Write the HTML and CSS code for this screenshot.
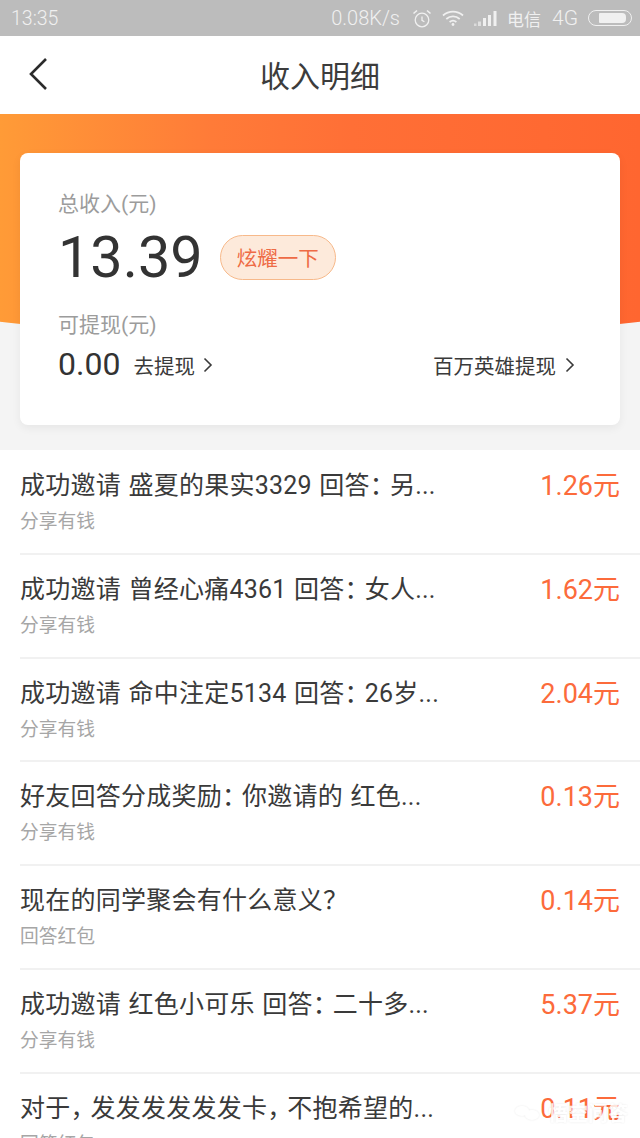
FILE: index.html
```html
<!DOCTYPE html>
<html lang="zh-CN">

<head>
    <meta charset="UTF-8">
    <meta name="viewport" content="width=device-width, initial-scale=1.0">
    <title>收入明细</title>
    <link rel="stylesheet" href="styles.css">
</head>

<body>
    <div class="pantalla">
        <div class="estado">
            <span class="hora">13:35</span>
            <div class="estado-der">
                <span class="red">0.08K/s</span>
                <svg width="20" height="19" viewBox="0 0 20 19" fill="none" stroke="#f0f0f0" stroke-width="1.3">
                    <circle cx="10" cy="11" r="6.800" />
                    <path d="M10 7.500v3.800l2.400 1.400" />
                    <path d="M1.500 4.500 5 1.500M18.500 4.500 15 1.500" stroke-width="1.600" />
                </svg>
                <svg width="22" height="16" viewBox="0 0 22 16" fill="none" stroke="#f0f0f0" stroke-width="1.700">
                    <path d="M1 5.500c5.800-5.200 14.200-5.200 20 0" />
                    <path d="M4.300 9c4-3.500 9.400-3.500 13.400 0" />
                    <path d="M7.600 12c2-1.600 4.800-1.600 6.800 0" />
                    <circle cx="11" cy="14.500" r="1.400" fill="#f0f0f0" stroke="none" />
                </svg>
                <svg width="23" height="15" viewBox="0 0 23 15" fill="#f0f0f0">
                    <rect x="0" y="12.500" width="2.500" height="2.500" opacity=".6" />
                    <rect x="4" y="10.500" width="3" height="4.500" opacity=".7" />
                    <rect x="9" y="7" width="3" height="8" />
                    <rect x="14" y="4" width="3" height="11" />
                    <rect x="19.500" y="0" width="3" height="15" />
                </svg>
                <span class="operador">电信</span>
                <span class="red-tipo">4G</span>
                <div class="bateria"><div class="bateria-nivel"></div></div>
            </div>
        </div>

        <div class="cabecera">
            <svg class="atras" width="20" height="34" viewBox="0 0 20 34" fill="none" stroke="#2b2b2b" stroke-width="2.600">
                <path d="M18 2 3 17l15 15" />
            </svg>
            <h1>收入明细</h1>
        </div>

        <div class="resumen">
            <div class="naranja"></div>
            <div class="tarjeta">
                <div class="etiqueta">总收入(元)</div>
                <div class="fila-total">
                    <span class="total">13.39</span>
                    <span class="presumir">炫耀一下</span>
                </div>
                <div class="etiqueta etiqueta-2">可提现(元)</div>
                <div class="fila-retiro">
                    <span class="saldo">0.00</span>
                    <span class="enlace">去提现
                        <svg width="10" height="16" viewBox="0 0 10 16" fill="none" stroke="#3a3a3a" stroke-width="1.600"><path d="M1.500 1.500 8 8l-6.500 6.500" /></svg>
                    </span>
                    <span class="enlace enlace-der">百万英雄提现
                        <svg width="10" height="16" viewBox="0 0 10 16" fill="none" stroke="#3a3a3a" stroke-width="1.600"><path d="M1.500 1.500 8 8l-6.500 6.500" /></svg>
                    </span>
                </div>
            </div>
        </div>

        <div class="lista">
            <div class="item">
                <div class="item-texto">
                    <div class="titulo">成功邀请 盛夏的果实3329 回答<span class="punt">：</span>另...</div>
                    <div class="origen">分享有钱</div>
                </div>
                <div class="monto">1.26元</div>
            </div>
            <div class="item">
                <div class="item-texto">
                    <div class="titulo">成功邀请 曾经心痛4361 回答<span class="punt">：</span>女人...</div>
                    <div class="origen">分享有钱</div>
                </div>
                <div class="monto">1.62元</div>
            </div>
            <div class="item">
                <div class="item-texto">
                    <div class="titulo">成功邀请 命中注定5134 回答<span class="punt">：</span>26岁...</div>
                    <div class="origen">分享有钱</div>
                </div>
                <div class="monto">2.04元</div>
            </div>
            <div class="item">
                <div class="item-texto">
                    <div class="titulo">好友回答分成奖励<span class="punt">：</span>你邀请的 红色...</div>
                    <div class="origen">分享有钱</div>
                </div>
                <div class="monto">0.13元</div>
            </div>
            <div class="item">
                <div class="item-texto">
                    <div class="titulo">现在的同学聚会有什么意义？</div>
                    <div class="origen">回答红包</div>
                </div>
                <div class="monto">0.14元</div>
            </div>
            <div class="item">
                <div class="item-texto">
                    <div class="titulo">成功邀请 红色小可乐 回答<span class="punt">：</span>二十多...</div>
                    <div class="origen">分享有钱</div>
                </div>
                <div class="monto">5.37元</div>
            </div>
            <div class="item">
                <div class="item-texto">
                    <div class="titulo">对于<span class="punt">，</span>发发发发发发卡<span class="punt">，</span>不抱希望的...</div>
                    <div class="origen">回答红包</div>
                </div>
                <div class="monto">0.11元</div>
            </div>
        </div>

        <div class="marca">
            <svg width="26" height="16" viewBox="0 0 26 16" fill="#ffffff">
                <ellipse cx="8" cy="6" rx="7" ry="5" />
                <ellipse cx="18" cy="10" rx="7" ry="5" />
            </svg>
            <span>悟空问答</span>
        </div>
    </div>
</body>

</html>
```

FILE: styles.css
```css
* {
    box-sizing: border-box;
}

html,
body {
    margin: 0;
    padding: 0;
    background: #fff;
}

.pantalla {
    position: relative;
    width: 640px;
    height: 1138px;
    overflow: hidden;
    font-family: "Roboto", "Noto Sans CJK SC", sans-serif;
    color: #2e2e2e;
}

/* barra de estado */
.estado {
    height: 36px;
    background: #bcbcbc;
    color: #f0f0f0;
    font-size: 20px;
    font-weight: 300;
    display: flex;
    align-items: center;
    justify-content: space-between;
    padding: 0 8px 0 11px;
}

.hora {
    font-size: 19.500px;
}

.estado-der {
    display: flex;
    align-items: center;
    gap: 10px;
}

.red {
    margin-right: 2px;
}

.operador {
    font-size: 17px;
    font-weight: 400;
}

.red-tipo {
    font-size: 21px;
    margin-left: 1px;
}

.bateria {
    width: 44px;
    height: 16px;
    border: 1.500px solid #f0f0f0;
    border-radius: 8px;
    padding: 2px 5px 2px 10px;
}

.bateria-nivel {
    height: 100%;
    background: #f0f0f0;
    border-radius: 1px 4px 4px 1px;
}

/* cabecera */
.cabecera {
    height: 78px;
    background: #fff;
    display: flex;
    align-items: center;
    justify-content: center;
    position: relative;
}

.cabecera h1 {
    margin: 0 0 3px;
    font-size: 30px;
    font-weight: 400;
    color: #3c3c3c;
}

.atras {
    position: absolute;
    left: 28px;
    top: 21px;
}

/* bloque naranja con tarjeta */
.resumen {
    background: #f4f4f4;
    height: 336px;
}

.naranja {
    height: 227px;
    background: linear-gradient(90deg, #ff9b37 0%, #ff7b38 33%, #ff6f36 55%, #ff6630 100%);
    clip-path: ellipse(813px 226px at 50% 0);
}

.tarjeta {
    margin: -188px 20px 0;
    height: 272px;
    background: #fff;
    border-radius: 8px;
    box-shadow: 0 3px 10px rgba(0, 0, 0, .06);
    padding: 37px 38px 0 38px;
    position: relative;
}

.etiqueta {
    font-size: 21px;
    line-height: 28px;
    color: #9c9c9c;
}

.etiqueta-2 {
    margin-top: 15px;
}

.fila-total {
    display: flex;
    align-items: center;
    gap: 18px;
    height: 78px;
}

.total {
    font-size: 57.600px;
    color: #333;
}

.presumir {
    width: 116px;
    height: 45px;
    margin-left: -1px;
    border: 1px solid #f7b98a;
    border-radius: 23px;
    background: #fdeadb;
    color: #ee6b45;
    font-size: 20.500px;
    display: flex;
    align-items: center;
    justify-content: center;
}

.fila-retiro {
    display: flex;
    align-items: center;
    height: 50px;
}

.saldo {
    font-size: 32px;
    color: #333;
    margin-right: 13px;
}

.enlace {
    display: flex;
    align-items: center;
    gap: 8px;
    font-size: 20.500px;
    color: #3a3a3a;
    margin-top: 1px;
}

.enlace-der {
    margin-left: auto;
    margin-right: 7px;
    gap: 9px;
}

/* lista de ingresos */
.lista {
    padding-top: 1px;
}

.item {
    height: 103.840px;
    margin-left: 20px;
    padding: 18px 20px 0 0;
    border-bottom: 2px solid #f1f1f1;
    display: flex;
    justify-content: space-between;
}

.item-texto {
    min-width: 0;
}

.titulo {
    font-size: 25px;
    letter-spacing: .25px;
    word-spacing: 1px;
    line-height: 34px;
    color: #3a3a3a;
    white-space: nowrap;
}

/* la variante TC centra los signos en su caja */
.punt {
    font-family: "Noto Sans CJK TC", sans-serif;
    letter-spacing: -5px;
    line-height: 0;
}

.origen {
    font-size: 18.750px;
    line-height: 26px;
    margin-top: 6px;
    color: #a6a6a6;
}

.monto {
    font-size: 27px;
    line-height: 34px;
    color: #fc6b3b;
    white-space: nowrap;
}

/* marca de agua */
.marca {
    position: absolute;
    right: 12px;
    bottom: 12px;
    display: flex;
    align-items: center;
    gap: 8px;
    color: #fff;
    font-size: 20px;
    line-height: 26px;
    font-family: "Noto Sans CJK SC", sans-serif;
    font-weight: 700;
    opacity: .82;
    filter: blur(.7px) drop-shadow(0 0 1px rgba(0, 0, 0, .1));
}
```
